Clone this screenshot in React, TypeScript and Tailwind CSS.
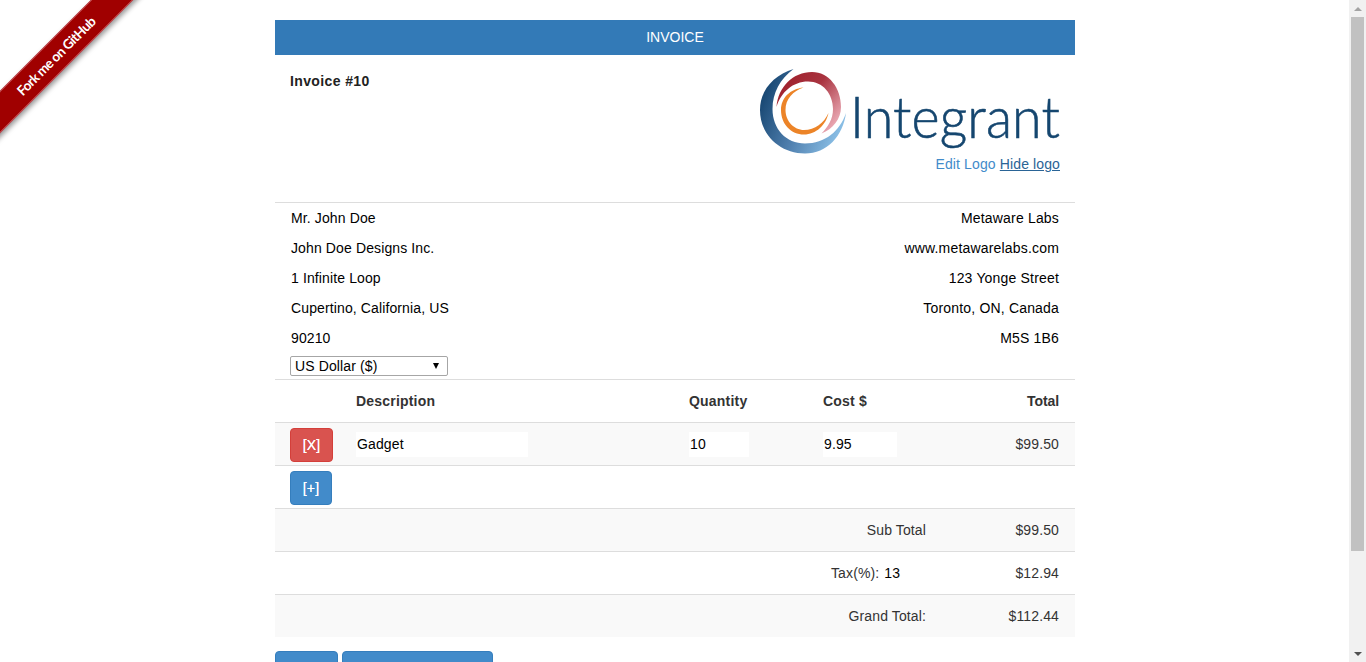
const rows = [
  ["Mr. John Doe", "Metaware Labs"],
  ["John Doe Designs Inc.", "www.metawarelabs.com"],
  ["1 Infinite Loop", "123 Yonge Street"],
  ["Cupertino, California, US", "Toronto, ON, Canada"],
  ["90210", "M5S 1B6"],
];

function Logo() {
  return (
    <div className="flex h-[85px] items-start justify-end">
      <svg width="92" height="85" viewBox="0 0 92 85" className="shrink-0">
        <defs>
          <linearGradient id="blue" x1="0" y1="0.3" x2="1" y2="0.7">
            <stop offset="0" stopColor="#15446f" />
            <stop offset="0.5" stopColor="#4f7fae" />
            <stop offset="1" stopColor="#8fc4ea" />
          </linearGradient>
          <linearGradient id="red" x1="0" y1="0" x2="1" y2="0.8">
            <stop offset="0" stopColor="#9c1a26" />
            <stop offset="0.5" stopColor="#a93440" />
            <stop offset="1" stopColor="#eeb0bb" />
          </linearGradient>
        </defs>
        <path d="M33.5 0C14 6 0 21 0 41C0 66 20 84.5 45 84.5C67 84.5 83 67 86 44C80 62 65 74.5 45 74.5C26 74.5 12.5 60 12.5 40C12.5 24 20 10 33.5 0Z" fill="url(#blue)" />
        <path d="M16.5 38C18 18 33 3 52 3C69 3 81 19 81 38C81 50 73 60 61.5 64.5C68 58 73 50 73 40C73 25 63 12.5 48 12.5C33 12.5 21 23 16.5 38Z" fill="url(#red)" />
        <path d="M43.5 18.5C30 20 21 29 21 41C21 55 31 65.5 44 65.5C56 65.5 66 56 68.5 44C64 54 55 61 44 61C34 61 25.5 52 25.5 41C25.5 30 33 22 43.5 18.5Z" fill="#ec8428" />
      </svg>
      <svg width="208" height="85" viewBox="0 0 208 85" className="shrink-0 overflow-visible">
        <text x="-2" y="69" textLength="210" lengthAdjust="spacingAndGlyphs" fill="#15466f" stroke="#15466f" strokeWidth="0.6" fontSize="58" fontWeight="300" fontFamily="Lato, sans-serif">Integrant</text>
      </svg>
    </div>
  );
}

function Scrollbar() {
  return (
    <aside className="flex h-[662px] w-[17px] shrink-0 flex-col items-center bg-[#f1f1f1]">
      <div className="flex h-[17px] items-center justify-center">
        <div className="h-0 w-0 border-x-[4px] border-b-[4px] border-x-transparent border-b-[#a3a3a3]" />
      </div>
      <div className="h-[534px] w-[13px] bg-[#c1c1c1]" />
      <div className="flex-1" />
      <div className="flex h-[17px] items-center justify-center">
        <div className="h-0 w-0 border-x-[4px] border-t-[4px] border-x-transparent border-t-[#505050]" />
      </div>
    </aside>
  );
}

export default function App() {
  return (
    <div className="relative flex h-[662px] w-[1366px] overflow-hidden bg-white font-['Liberation_Sans',Arial,sans-serif] text-[14px] leading-[20px] tracking-[0.12px] text-[#333]">
      <div className="pointer-events-none absolute left-[-57px] top-[41px] h-[30px] w-[226px] -rotate-45 overflow-hidden border-y border-[#c65a60] bg-[#a00000] text-center font-['Lato',sans-serif] text-[13.5px] font-bold leading-[28px] tracking-[-0.6px] text-white shadow-[0_3px_5px_rgba(0,0,0,0.4)]">
        Fork me on GitHub
      </div>
      <main className="h-[662px] flex-1 overflow-hidden pl-[275px] pt-[20px]">
        <div className="w-[800px]">
          <div className="flex h-[35px] items-center justify-center bg-[#337ab7] pb-px tracking-normal text-white">INVOICE</div>
          <div className="flex h-[148px] justify-between border-b border-[#ddd] px-[15px]">
            <div className="pt-[16px] font-bold tracking-[0.38px] text-[#222]">Invoice #10</div>
            <div className="flex flex-col items-end pt-[14px]">
              <Logo />
              <div>
                <span className="text-[#428bca]">Edit Logo</span>{" "}
                <span className="text-[#2a6496] underline">Hide logo</span>
              </div>
            </div>
          </div>
          <div className="flex flex-col px-[16px] text-black">
            {rows.map(([a, b]) => (
              <div key={a} className="flex h-[30px] items-center justify-between">
                <span>{a}</span>
                <span className="tracking-[0.18px]">{b}</span>
              </div>
            ))}
          </div>
          <div className="flex h-[27px] items-start border-b border-[#ddd] pl-[15px] pt-[3px]">
            <div className="flex h-[20px] w-[158px] items-center justify-between rounded-[2px] border border-[#a6a6a6] pl-[4px] pr-[8px] text-black">
              <span>US Dollar ($)</span>
              <span className="h-0 w-0 border-x-[3.5px] border-t-[6px] border-x-transparent border-t-black" />
            </div>
          </div>
          <div className="flex h-[43px] items-center border-b border-[#ddd] font-bold tracking-[0.2px]">
            <div className="w-[81px]" />
            <div className="w-[333px]">Description</div>
            <div className="w-[134px]">Quantity</div>
            <div className="w-[120px]">Cost $</div>
            <div className="w-[116px] text-right tracking-[-0.1px]">Total</div>
          </div>
          <div className="flex h-[43px] items-center border-b border-[#ddd] bg-[#f9f9f9]">
            <div className="h-full w-[81px] pl-[15px] pt-[5px]">
              <div className="flex h-[34px] w-[43px] items-center justify-center rounded-[4px] border border-[#d43f3a] bg-[#d9534f] text-white [text-shadow:0_0_0.6px_white]">[X]</div>
            </div>
            <div className="w-[333px]">
              <div className="flex h-[25px] w-[172px] items-center bg-white pl-[1px] text-black">Gadget</div>
            </div>
            <div className="w-[134px]">
              <div className="flex h-[25px] w-[60px] items-center bg-white pl-[1px] text-black">10</div>
            </div>
            <div className="w-[120px]">
              <div className="flex h-[25px] w-[74px] items-center bg-white pl-[1px] text-black">9.95</div>
            </div>
            <div className="w-[116px] text-right">$99.50</div>
          </div>
          <div className="h-[43px] border-b border-[#ddd] pl-[15px] pt-[5px]">
            <div className="flex h-[34px] w-[42px] items-center justify-center rounded-[4px] border border-[#357ebd] bg-[#428bca] text-white [text-shadow:0_0_0.6px_white]">[+]</div>
          </div>
          <div className="flex h-[43px] items-center border-b border-[#ddd] bg-[#f9f9f9] pr-[16px]">
            <div className="w-[651px] text-right">Sub Total</div>
            <div className="flex-1 text-right">$99.50</div>
          </div>
          <div className="flex h-[43px] items-center border-b border-[#ddd] pr-[16px]">
            <div className="w-[556px]" />
            <div className="w-[69px] whitespace-nowrap text-black"><span className="mr-[1px] text-[#333]">Tax(%):</span> 13</div>
            <div className="flex-1 text-right">$12.94</div>
          </div>
          <div className="flex h-[42px] items-center bg-[#f9f9f9] pr-[16px]">
            <div className="w-[651px] text-right">Grand Total:</div>
            <div className="flex-1 text-right">$112.44</div>
          </div>
          <div className="mt-[14px] flex gap-[4px]">
            <div className="h-[34px] w-[63px] rounded-[4px] border border-[#357ebd] bg-[#428bca]" />
            <div className="h-[34px] w-[151px] rounded-[4px] border border-[#357ebd] bg-[#428bca]" />
          </div>
        </div>
      </main>
      <Scrollbar />
    </div>
  );
}
